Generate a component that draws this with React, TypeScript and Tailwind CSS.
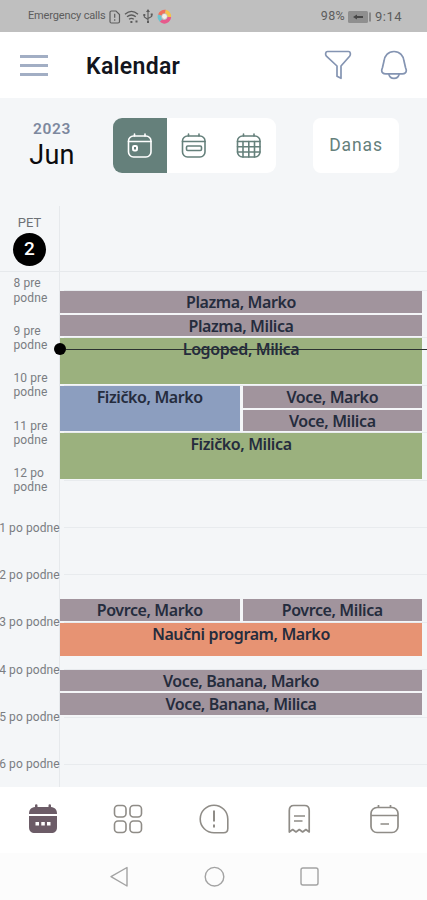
import type { ReactNode } from "react";
import clsx from "clsx";

interface CalendarEvent {
  title: string;
  tone: string;
  height: string;
}

const MAUVE = "bg-[#a1949d]";
const GREEN = "bg-[#9bb17e]";
const BLUE = "bg-[#8c9ebf]";
const ORANGE = "bg-[#e79373]";

const hours = [
  ["8 pre", "podne"],
  ["9 pre", "podne"],
  ["10 pre", "podne"],
  ["11 pre", "podne"],
  ["12 po", "podne"],
  ["1 po podne"],
  ["2 po podne"],
  ["3 po podne"],
  ["4 po podne"],
  ["5 po podne"],
  ["6 po podne"],
];

function EventBlock({ title, tone, height }: CalendarEvent) {
  return (
    <div className={clsx("flex justify-center overflow-hidden", tone, height)}>
      <span className="whitespace-nowrap font-['Noto_Sans',sans-serif] text-[16px] font-semibold leading-[23px] tracking-[-0.4px] text-[#252c3d]">
        {title}
      </span>
    </div>
  );
}

function StatusBar() {
  return (
    <div className="flex h-8 shrink-0 items-center bg-[#bfbfbf] pl-[28px] pr-[25px] pt-px text-[#5c5c5c]">
      <span className="w-[78px] whitespace-nowrap text-[11px] tracking-[-0.15px]">Emergency calls</span>
      <svg className="ml-[3px]" width="12" height="14" viewBox="0 0 12 14" fill="none" stroke="currentColor" strokeWidth="1.2">
        <path d="M2.5 1h4.500L10.500 4.500v7c0 1-.5 1.500-1.500 1.500H2.500C1.500 13 1 12.500 1 11.500v-9C1 1.500 1.500 1 2.500 1zM5.700 3.800v4M5.700 9.300v1.500" />
      </svg>
      <svg className="ml-[3px]" width="15" height="14" viewBox="0 0 15 14" fill="none" stroke="currentColor" strokeWidth="1.3">
        <path d="M1 4.2c4-3.5 9-3.5 13 0M3 6.8c2.8-2.3 6-2.3 8.800 0M5 9.3c1.5-1.2 3.300-1.2 4.800 0" />
        <path d="M6.4 12h2M11.5 11.5h2" strokeWidth="1.8" />
      </svg>
      <svg className="ml-[4px]" width="10" height="15" viewBox="0 0 10 15" fill="none" stroke="currentColor" strokeWidth="1.1">
        <path d="M5 1v12M1.300 6v2L5 10.500M8.700 5.500V7.500L5 9.500" />
        <path d="M5 0l2 3H3zM0.300 5h2v2h-2zM7.700 4.500h2v2h-2zM4 12h2v2H4z" fill="currentColor" stroke="none" />
      </svg>
      <svg className="ml-[4px]" width="15" height="15" viewBox="0 0 15 15" fill="none" strokeWidth="3.6">
        <path d="M4 11.5A5 5 0 0 1 2.800 6" stroke="#6cc3cf" />
        <path d="M2.800 6A5 5 0 0 1 8.500 2.600" stroke="#f0705c" />
        <path d="M8.500 2.600A5 5 0 0 1 12.300 8" stroke="#f5c34a" />
        <path d="M12.300 8A5 5 0 0 1 4 11.500" stroke="#e65a8c" />
        <circle cx="7.500" cy="7.500" r="2.400" fill="#f4eee8" />
      </svg>
      <span className="ml-auto text-[12.5px] tracking-[0.3px]">98%</span>
      <svg className="ml-[3px]" width="24" height="12" viewBox="0 0 24 12">
        <rect width="20" height="12" rx="1.500" fill="#8f8f8f" />
        <path d="M5 6l4-2.500v1.500h6v2H9v1.500z" fill="#474747" />
        <path d="M22 1.500v9" stroke="#7c7c7c" strokeWidth="1.600" />
      </svg>
      <span className="ml-[3px] text-[13px] tracking-[0.5px]">9:14</span>
    </div>
  );
}

function Header() {
  return (
    <header className="flex h-[66px] shrink-0 items-center bg-white pl-5 pr-[19px]">
      <button type="button" aria-label="Meni" className="flex flex-col gap-[6px]">
        <span className="h-[3px] w-7 bg-[#a2aec4]" />
        <span className="h-[3px] w-7 bg-[#a2aec4]" />
        <span className="h-[3px] w-7 bg-[#a2aec4]" />
      </button>
      <h1 className="ml-[38px] mt-[3px] font-[Roboto,sans-serif] text-[23px] font-semibold leading-7 tracking-[0.3px] text-[#12151d]">Kalendar</h1>
      <svg className="ml-auto" width="28" height="30" viewBox="0 0 28 30" fill="none" stroke="#8494b2" strokeWidth="1.7" strokeLinejoin="round">
        <path d="M3.500 1.500h21c2 0 2.500 3 1.100 4.700L17 16v12.300l-4-2V16L2.400 6.200C1 4.500 1.500 1.500 3.500 1.500z" />
      </svg>
      <svg className="ml-[28px]" width="28" height="30" viewBox="0 0 28 30" fill="none" stroke="#8494b2" strokeWidth="1.7" strokeLinejoin="round">
        <path d="M14 1.500C8 1.500 4.500 5.800 4 11l-1.500 6.500C2 19 1.700 19.500 1.700 20.500c0 2 1.500 3.300 4 3.300h16.600c2.500 0 4-1.300 4-3.300 0-1-.3-1.500-.8-3L24 11C23.500 5.800 20 1.500 14 1.500z" />
        <path d="M8.800 23.800c1 6 9.400 6 10.400 0" />
      </svg>
    </header>
  );
}

function CalendarIcon({ children }: { children: ReactNode }) {
  return (
    <svg width="26" height="26" viewBox="0 0 26 26" fill="none" stroke="currentColor" strokeWidth="1.6" strokeLinecap="round">
      <rect x="1.500" y="3" width="22.500" height="21" rx="5" />
      <path d="M7.500 1v2M18 1v2M1.500 8.500h22.500" />
      {children}
    </svg>
  );
}

function Toolbar() {
  return (
    <div className="flex h-[108px] shrink-0 items-start pt-5">
      <div className="flex w-[104px] flex-col items-center pt-[3px]">
        <span className="font-[Roboto,sans-serif] text-[15.5px] font-semibold leading-4 tracking-[0.6px] text-[#7d889e]">2023</span>
        <span className="mt-[2px] font-[Roboto,sans-serif] text-[27px] leading-8 tracking-[0.3px] text-[#0b0b0d]">Jun</span>
      </div>
      <div className="ml-[9px] flex h-[55px] w-[163px] overflow-hidden rounded-[9px] bg-white text-[#65807b]">
        <button type="button" aria-label="Dan" className="flex flex-1 items-center justify-center bg-[#65807b] text-white">
          <CalendarIcon>
            <rect x="6" y="13" width="4" height="4.500" rx="1.200" strokeWidth="2" />
          </CalendarIcon>
        </button>
        <button type="button" aria-label="Sedmica" className="flex flex-1 items-center justify-center">
          <CalendarIcon>
            <rect x="5.500" y="13" width="15" height="4.500" rx="1.200" />
          </CalendarIcon>
        </button>
        <button type="button" aria-label="Mesec" className="flex flex-1 items-center justify-center">
          <CalendarIcon>
            <path d="M7 8.500V24M12.800 8.500V24M18.500 8.500V24M1.500 13.700H24M1.500 19H24" />
          </CalendarIcon>
        </button>
      </div>
      <button type="button" className="ml-[37px] h-[55px] w-[86px] rounded-lg bg-white font-[Roboto,sans-serif] text-[17.5px] tracking-[0.9px] text-[#65807b]">
        Danas
      </button>
    </div>
  );
}

function DayHeader() {
  return (
    <div className="flex h-[66px] shrink-0 border-b border-[#e6e9ec]">
      <div className="flex w-[60px] flex-col items-center border-r border-[#e6e9ec] pt-[9px] font-[Roboto,sans-serif]">
        <span className="text-[13px] leading-[15px] text-[#6d7176]">PET</span>
        <span className="mt-[3px] flex h-[33px] w-[33px] items-center justify-center rounded-full bg-black text-[19px] font-medium text-white">2</span>
      </div>
    </div>
  );
}

function Schedule() {
  return (
    <div className="relative flex h-[515px] shrink-0 overflow-hidden">
      <div className="flex w-[60px] shrink-0 flex-col border-r border-[#e6e9ec]">
        <div className="-mt-[5px]">
          {hours.map((lines) => (
            <div
              key={lines[0]}
              className="flex h-[47.4px] items-center justify-center font-[Roboto,sans-serif] text-[12px] leading-[14.3px] tracking-[0.1px] text-[#7a7d82]"
            >
              <span className={clsx(lines.length > 1 ? "w-[32px]" : "shrink-0", "whitespace-nowrap")}>
                {lines.map((line) => (
                  <span key={line} className="block">
                    {line}
                  </span>
                ))}
              </span>
            </div>
          ))}
        </div>
      </div>

      <div className="grid flex-1">
        <div className="col-start-1 row-start-1 pl-1">
          <div className="h-[18px]" />
          {hours.map((lines) => (
            <div key={lines[0]} className="h-[47.4px] border-t border-[#e8ebee]" />
          ))}
        </div>

        <div className="z-10 col-start-1 row-start-1 flex flex-col gap-[2px] pr-[5px] pt-[19px]">
          <EventBlock title="Plazma, Marko" tone={MAUVE} height="h-[22px]" />
          <EventBlock title="Plazma, Milica" tone={MAUVE} height="h-[21px]" />
          <EventBlock title="Logoped, Milica" tone={GREEN} height="h-[46px]" />
          <div className="grid grid-cols-2 gap-[3px]">
            <EventBlock title="Fizičko, Marko" tone={BLUE} height="h-[45px]" />
            <div className="flex flex-col gap-[2px]">
              <EventBlock title="Voce, Marko" tone={MAUVE} height="h-[22px]" />
              <EventBlock title="Voce, Milica" tone={MAUVE} height="h-[21px]" />
            </div>
          </div>
          <EventBlock title="Fizičko, Milica" tone={GREEN} height="h-[46px]" />
          <div className="mt-[118px] grid grid-cols-2 gap-[3px]">
            <EventBlock title="Povrce, Marko" tone={MAUVE} height="h-[22px]" />
            <EventBlock title="Povrce, Milica" tone={MAUVE} height="h-[22px]" />
          </div>
          <EventBlock title="Naučni program, Marko" tone={ORANGE} height="h-[33px]" />
          <div className="mt-[12px] flex flex-col gap-[2px]">
            <EventBlock title="Voce, Banana, Marko" tone={MAUVE} height="h-[21px]" />
            <EventBlock title="Voce, Banana, Milica" tone={MAUVE} height="h-[22px]" />
          </div>
        </div>
      </div>

      {/* current time marker */}
      <div className="absolute left-[54px] right-0 top-[71px] z-20 flex items-center">
        <span className="h-3 w-3 rounded-full bg-black" />
        <span className="h-px flex-1 bg-[#2b3230]" />
      </div>
    </div>
  );
}

function TabBar() {
  return (
    <nav className="flex h-[66px] shrink-0 items-center bg-white pb-[3px] text-[#8f8c87]">
      <span className="flex flex-1 justify-center">
        <svg width="30" height="30" viewBox="0 0 30 30" fill="#6c5c67">
          <path d="M1 10c0-4.500 2-6.500 6-7V1.500a1.200 1.200 0 0 1 2.500 0V3h11V1.500a1.200 1.200 0 0 1 2.500 0V3c4 .5 6 2.500 6 7z" />
          <path d="M1 12h28v11c0 4-2 6-6 6H7c-4 0-6-2-6-6z" />
          <path d="M7.500 18H11v3.500H7.500zM13.300 18h3.500v3.500h-3.500zM19 18h3.500v3.500H19z" fill="#fff" />
        </svg>
      </span>
      <span className="flex flex-1 justify-center">
        <svg width="30" height="30" viewBox="0 0 30 30" fill="none" stroke="currentColor" strokeWidth="1.6">
          <rect x="1.500" y="1.500" width="11.500" height="11.500" rx="3.500" />
          <rect x="17" y="1.500" width="11.500" height="11.500" rx="3.500" />
          <rect x="1.500" y="17" width="11.500" height="11.500" rx="3.500" />
          <rect x="17" y="17" width="11.500" height="11.500" rx="3.500" />
        </svg>
      </span>
      <span className="flex flex-1 justify-center">
        <svg width="30" height="30" viewBox="0 0 30 30" fill="none" stroke="currentColor" strokeWidth="1.6">
          <path d="M15 1.200A13.800 13.800 0 0 0 15 28.800h9.500c2.800 0 4.300-1.500 4.300-4.300V15A13.800 13.800 0 0 0 15 1.200z" />
          <path d="M15 6.500v11M15 20.500v3" strokeWidth="2" />
        </svg>
      </span>
      <span className="flex flex-1 justify-center">
        <svg width="24" height="30" viewBox="0 0 24 30" fill="none" stroke="currentColor" strokeWidth="1.7" strokeLinejoin="round">
          <path d="M2.300 28V6.500c0-3.500 1.500-5 4.500-5h10.900c3 0 4.500 1.500 4.500 5V28l-3.300-2.500-3.300 2.500-3.300-2.500L9 28l-3.300-2.500z" />
          <path d="M7 12h11M7 17h8.500" />
        </svg>
      </span>
      <span className="flex flex-1 justify-center">
        <svg width="30" height="30" viewBox="0 0 30 30" fill="none" stroke="currentColor" strokeWidth="1.7">
          <rect x="2" y="3.500" width="27" height="25" rx="6" />
          <path d="M9.500 1v2.500M21.500 1v2.500M2 11.500h27M11.500 20H20" />
        </svg>
      </span>
    </nav>
  );
}

function SystemNav() {
  return (
    <div className="flex h-[47px] shrink-0 items-center justify-center gap-[74px] bg-[#fcfcfc] pl-px text-[#a3a3a3]">
      <svg width="21" height="22" viewBox="0 0 21 22" fill="none" stroke="currentColor" strokeWidth="1.4" strokeLinejoin="round">
        <path d="M18 1.500v18.500L2 10.700z" />
      </svg>
      <svg width="21" height="22" viewBox="0 0 21 22" fill="none" stroke="currentColor" strokeWidth="1.4">
        <circle cx="10.500" cy="10.700" r="9.300" />
      </svg>
      <svg width="21" height="22" viewBox="0 0 21 22" fill="none" stroke="currentColor" strokeWidth="1.4">
        <rect x="2" y="2" width="17" height="17" rx="2" />
      </svg>
    </div>
  );
}

export default function App() {
  return (
    <div className="flex h-[900px] w-[427px] flex-col overflow-hidden bg-[#f4f6f8] font-[Roboto,sans-serif]">
      <StatusBar />
      <Header />
      <Toolbar />
      <DayHeader />
      <Schedule />
      <TabBar />
      <SystemNav />
    </div>
  );
}
